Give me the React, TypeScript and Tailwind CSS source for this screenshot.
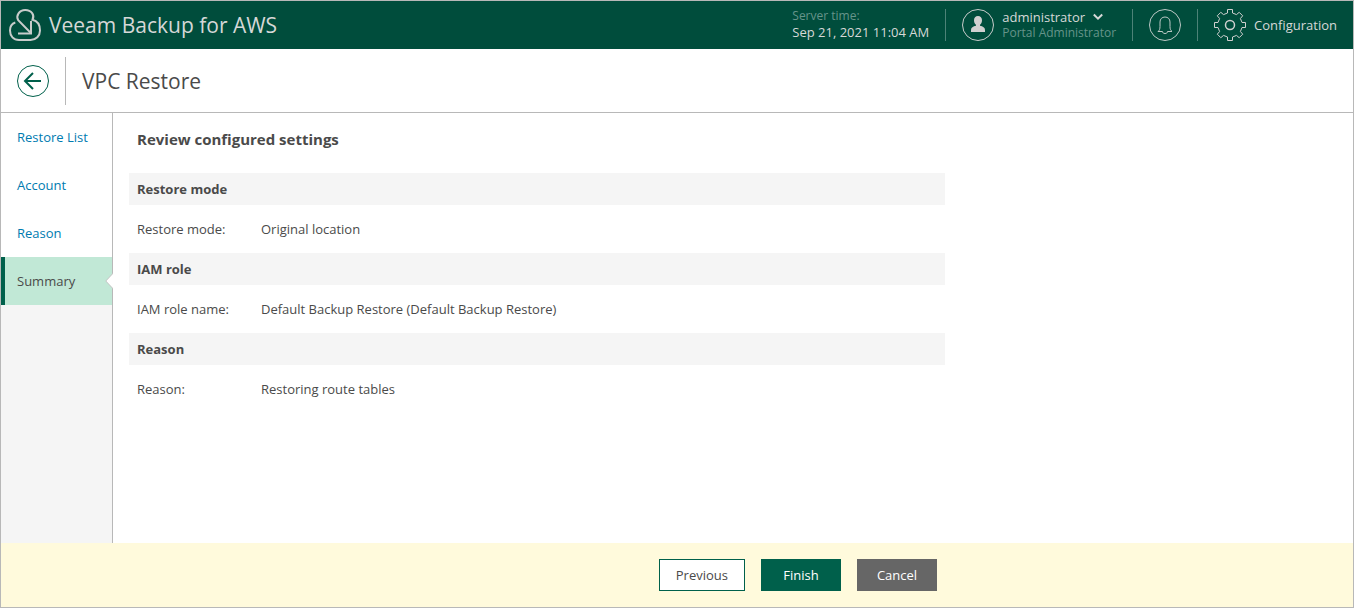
import React from "react";

const steps = ["Restore List", "Account", "Reason", "Summary"];

const sections = [
  {
    title: "Restore mode",
    label: "Restore mode:",
    value: "Original location",
  },
  {
    title: "IAM role",
    label: "IAM role name:",
    value: "Default Backup Restore (Default Backup Restore)",
  },
  {
    title: "Reason",
    label: "Reason:",
    value: "Restoring route tables",
  },
];

const Header = () => {
  return (
    <header className="flex h-12 items-center justify-between bg-[#004d3c] pl-2 pr-4 text-[#d6d8d7]">
      <div className="flex items-center gap-2">
        <svg className="size-8" viewBox="0 0 32 32" fill="none" stroke="#c8cccb" strokeWidth="2" aria-hidden="true">
          <path d="M6.300 13.500C3 14.500 1 17.700 1 21.500 1 27 4.500 31 10 31H21.500C27 31 31 27 31 21.500 31 16 28.500 12 23.500 10.800 26 6 22.500 1 16.200 1 10.500 1 6.500 6.500 9.200 11.200L21.800 24" />
          <path d="M22 12v12.500H9" />
        </svg>
        <span className="text-[21px] leading-8">Veeam Backup for AWS</span>
      </div>
      <div className="flex items-center gap-4">
        <div className="pb-0.5">
          <p className="text-xs leading-4 text-[#66948a]">Server time:</p>
          <p className="leading-4">Sep 21, 2021 11:04 AM</p>
        </div>
        <div className="h-8 w-px bg-[#4d8277]" />
        <button className="flex items-center gap-2 text-left">
          <svg className="size-8" viewBox="0 0 32 32" aria-hidden="true">
            <circle cx="16" cy="16" r="15.500" fill="none" stroke="#c8cccb" />
            <path
              fill="#d0d0d0"
              d="M16 7c2.500 0 4 1.700 4 4.200 0 2-.8 3.600-2 4.500v1c2.900.6 5 1.700 5 4.300v2H9v-2c0-2.600 2.100-3.700 5-4.300v-1c-1.200-.9-2-2.500-2-4.500C12 8.700 13.500 7 16 7z"
            />
          </svg>
          <span className="block">
            <span className="flex items-center gap-2 leading-4">
              administrator
              <svg className="h-2 w-2.5" viewBox="0 0 10 8" fill="none" stroke="currentColor" strokeWidth="2" aria-hidden="true">
                <path d="M.8 1.500 5 5.700l4.200-4.200" />
              </svg>
            </span>
            <span className="block text-xs leading-4 text-[#66948a]">Portal Administrator</span>
          </span>
        </button>
        <div className="h-8 w-px bg-[#4d8277]" />
        <button aria-label="Notifications">
          <svg className="block size-8" viewBox="0 0 32 32" fill="none" stroke="#bcc8c5" aria-hidden="true">
            <circle cx="16" cy="16" r="15.500" />
            <path d="M13.500 22.500H9c1.500-1.200 2-2.500 2-5V13c0-3 2-5 5-5s5 2 5 5v4.500c0 2.500.5 3.800 2 5h-4.500c0 1.300-1 2-2.500 2s-2.500-.7-2.500-2z" />
          </svg>
        </button>
        <div className="h-8 w-px bg-[#4d8277]" />
        <button className="flex items-center gap-2">
          <svg className="size-8" viewBox="0 0 32 32" fill="none" stroke="#d0d0d0" aria-hidden="true">
            <path d="M13.500.5h5V4l4 1.600 2.700-2.300 3.500 3.500-2.300 2.700L28 13.500h3.500v5H28l-1.600 4 2.300 2.700-3.500 3.500-2.700-2.300-4 1.600v3.500h-5V28l-4-1.600-2.700 2.300-3.500-3.500 2.300-2.700L4 18.500H.5v-5H4l1.600-4-2.300-2.700 3.500-3.500 2.700 2.300 4-1.600z" />
            <circle cx="16" cy="16" r="4.500" strokeWidth="1.500" />
          </svg>
          Configuration
        </button>
      </div>
    </header>
  );
};

const Sidebar = () => {
  return (
    <nav className="w-28 shrink-0 border-r border-[#b8b8b8] bg-[#f5f5f5]">
      {steps.map((step) =>
        step === "Summary" ? (
          <a
            key={step}
            href="#"
            aria-current="step"
            className="relative flex h-12 items-center border-l-4 border-[#00604b] bg-[#c1e8d6] pl-3"
          >
            {step}
            <svg className="absolute -right-px top-4 h-4 w-2" viewBox="0 0 8 16" aria-hidden="true">
              <path d="M8 .5.8 8 8 15.500z" fill="#fff" />
              <path d="M7.500.8.800 8l6.700 7.200" fill="none" stroke="#c4c4c4" />
            </svg>
          </a>
        ) : (
          <a key={step} href="#" className="flex h-12 items-center bg-white pl-4 text-[#007bb0]">
            {step}
          </a>
        )
      )}
    </nav>
  );
};

const App = () => {
  return (
    <div className="flex min-h-screen flex-col border border-[#b8b8b8] bg-white font-['Open_Sans',sans-serif] text-[13px] leading-4 text-[#4a4a4a]">
      <Header />
      <div className="flex h-16 items-center border-b border-[#b8b8b8] px-4">
        <button aria-label="Back">
          <svg className="block size-8" viewBox="0 0 32 32" fill="none" stroke="#00604b" aria-hidden="true">
            <circle cx="16" cy="16" r="15.500" />
            <path d="M16 8l-8 8 8 8M8.500 16H24" strokeWidth="2" />
          </svg>
        </button>
        <div className="mx-4 h-12 w-px bg-[#b8b8b8]" />
        <h1 className="text-[21px] leading-8">VPC Restore</h1>
      </div>
      <div className="flex flex-1">
        <Sidebar />
        <main className="flex-1 p-4">
          <h2 className="mb-6 px-2 text-[15px] font-bold leading-5">Review configured settings</h2>
          <div className="max-w-[816px]">
            {sections.map((section) => (
              <section key={section.title}>
                <h3 className="flex h-8 items-center bg-[#f5f5f5] px-2 font-bold">{section.title}</h3>
                <dl className="flex h-12 items-center px-2">
                  <dt className="w-31">{section.label}</dt>
                  <dd>{section.value}</dd>
                </dl>
              </section>
            ))}
          </div>
        </main>
      </div>
      <footer className="bg-[#fffadc]">
        <div className="flex h-16 max-w-[936px] items-center justify-end gap-4">
          <button className="h-8 border border-[#00604b] bg-white px-4">Previous</button>
          <button className="h-8 w-20 bg-[#00604b] font-medium text-white">Finish</button>
          <button className="h-8 w-20 bg-[#666] font-medium text-white">Cancel</button>
        </div>
      </footer>
    </div>
  );
};

export default App;
